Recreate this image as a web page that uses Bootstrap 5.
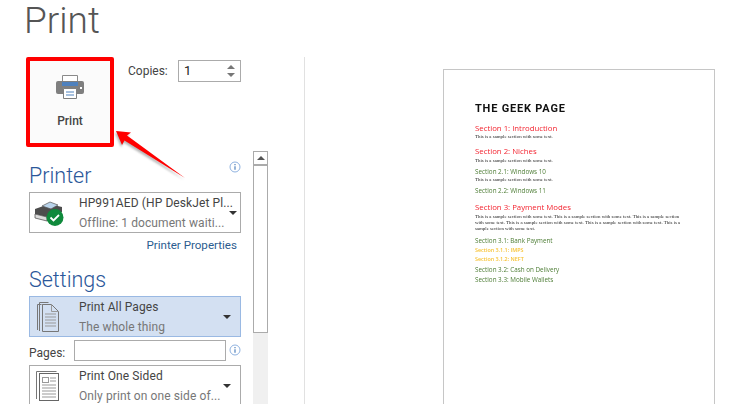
<!DOCTYPE html>
<html lang="en">
<head>
<meta charset="utf-8">
<title>Print</title>
<link href="https://cdn.jsdelivr.net/npm/bootstrap@5.3.0/dist/css/bootstrap.min.css" rel="stylesheet">
<style>
html,body{height:404px;overflow:hidden;background:#fff}
body{font-family:Roboto,"Open Sans",sans-serif;color:#444;font-size:12px;position:relative}
.page-title{font-size:37px;font-weight:300;line-height:41px;height:57px;margin:0;padding:0 0 0 24px;color:#555;font-family:Roboto,sans-serif}
.stage{height:347px}
.left-pane{width:305px;flex:none;border-right:1px solid #e1e1e1;padding-left:26px;height:347px;overflow:hidden}
.print-btn{width:88px;height:90px;border:4px solid #f00;border-radius:2px;background:#fbfbfb;color:#444;font-size:12px;font-weight:500;padding:13px 0 0;display:flex;flex-direction:column;align-items:center;line-height:16px}
.print-btn svg{display:block;margin-bottom:13px}
.copies-wrap{margin:3px 0 0 14px;height:22px;color:#444}
.copies-label{width:50px;flex:none}
.copies-box{width:63px;height:22px;border:1px solid #ababab;padding:0 0 0 5px;line-height:20px;color:#222;font-size:13px}
.spin{gap:4px;margin-right:5px}
.tri-up,.tri-down{width:0;height:0;border-left:4px solid transparent;border-right:4px solid transparent}
.tri-up{border-bottom:4px solid #777}.tri-down{border-top:4px solid #777}
.settings{width:212px;margin-left:3px}
.head-row{height:34px;margin-top:11px}
.sec-head{font-size:21.500px;line-height:28px;color:#2b579a;font-weight:300;margin:0}
.sec-settings{margin:10px 0 1px;height:29px}
.info-i{width:12px;height:12px;flex:none}
.info-top{margin-top:3px}
.drop{height:41px;border:1px solid #ababab;background:#fff;padding:0 9px 0 4px;color:#444}
.drop.active-drop{background:#d3e0f2;border-color:#9ab9e3}
.drop-icon{width:45px;flex:none}
.drop-text{width:150px;line-height:20px;white-space:nowrap;font-size:12px;letter-spacing:.1px}
.drop-text .sub{color:#777;display:block}
.tri-drop{width:0;height:0;border-left:4px solid transparent;border-right:4px solid transparent;border-top:4px solid #333;margin-left:auto}
.prop-link{color:#2b5c8f;text-align:right;padding:3px 4px 0 0;line-height:18px;height:23px;font-size:11.600px}
.pages-row{height:28px;padding-top:3px}
.pages-label{width:45px;flex:none;color:#444}
.pages-input{width:152px;height:21px;border:1px solid #ababab;background:#fff;flex:none}
.scroll-col{width:15px;height:253px;margin-left:12px;flex:none;background:#f0f0f0;margin-top:4px}
.scroll-thumb{height:182px;border:1px solid #ababab;background:#fff}
.scroll-up{height:14px;border-bottom:2px solid #ababab;display:flex;align-items:center;justify-content:center}
.scroll-up .tri-up{border-bottom:4px solid #555}
.preview{flex:1;padding:12px 0 0 138px;overflow:hidden}
.paper{width:272px;height:400px;border:1px solid #c6c6c6;padding:32px 0 0 31px;background:#fff}
.paper-flow{filter:blur(.22px)}
.doc-title{font-family:Roboto,sans-serif;font-weight:700;font-size:11px;letter-spacing:.8px;line-height:14px;color:#111;margin-bottom:7px}
.h-a,.h-b,.h-c,.body-t{white-space:nowrap}
.h-a{color:#f3232f;font-size:7.800px;line-height:10px;font-weight:500;font-family:"Open Sans",sans-serif}
.h-b{color:#4c7c34;font-size:6.300px;line-height:9px;font-weight:500;font-family:"Open Sans",sans-serif}
.h-c{color:#f7c233;font-size:5.400px;line-height:9px;font-weight:600;font-family:"Open Sans",sans-serif}
.body-t{font-family:"Liberation Serif",serif;color:#222;font-size:4.880px;line-height:6px}
.gap1{margin-top:1px}.gap2{margin-top:2px}.gap3{margin-top:3px}.gap4{margin-top:4px}.gap6{margin-top:6px}.gap7{margin-top:7px}
.arrow-over{position:absolute;left:110px;top:125px;width:85px;height:65px;pointer-events:none;overflow:visible}
.arrow-shadow{fill:#777;opacity:.55;filter:blur(1px)}
</style>
</head>
<body>
<h1 class="page-title">Print</h1>
<div class="stage d-flex">
  <div class="left-pane">
    <div class="d-flex">
      <button type="button" class="print-btn">
        <svg width="30" height="26" viewBox="0 0 30 26"><path d="M7.500 1.500h15v8h-15z" fill="#fff" stroke="#8a8a8a"/><rect x="1" y="7" width="28" height="13" rx="2" fill="#7f7f7f"/><rect x="7" y="8" width="16" height="4" fill="#4f81bd"/><rect x="25" y="13" width="2" height="2" fill="#fff"/><path d="M8.500 14.500h13v10h-13z" fill="#fff" stroke="#7f7f7f"/><path d="M11 18h8M11 21h8" stroke="#4f81bd"/></svg>
        <span>Print</span>
      </button>
      <div class="copies-wrap d-flex align-items-center">
        <span class="copies-label">Copies:</span>
        <div class="copies-box d-flex justify-content-between align-items-center"><span>1</span>
          <div class="spin d-flex flex-column"><div class="tri-up"></div><div class="tri-down"></div></div>
        </div>
      </div>
    </div>
    <div class="d-flex">
      <div class="settings">
        <div class="head-row d-flex justify-content-between">
          <h2 class="sec-head pt-1">Printer</h2>
          <svg class="info-i info-top" viewBox="0 0 12 12"><circle cx="6" cy="6" r="5" fill="#fff" stroke="#8fb2e0"/><path d="M6 5.200v3.600" stroke="#4f81bd" stroke-width="1.200"/><path d="M6 3v1.200" stroke="#4f81bd" stroke-width="1.200"/></svg>
        </div>
        <div class="drop d-flex align-items-center">
          <div class="drop-icon">
            <svg width="31" height="26" viewBox="0 0 31 26"><path d="M1 9l14-5 13 3v5L13 17 1 14z" fill="#4d4d4d"/><path d="M8 6l8-4 8 3-7 4z" fill="#b9d3ea" stroke="#555" stroke-width=".7"/><path d="M1 14l12 3v4L1 18z" fill="#dcdcdc" stroke="#444" stroke-width=".7"/><circle cx="21" cy="17.500" r="8.500" fill="#0f8a3c"/><path d="M16.500 17.500l3 3 5.500-5.500" fill="none" stroke="#fff" stroke-width="1.800"/></svg>
          </div>
          <div class="drop-text">HP991AED (HP DeskJet Pl...<span class="sub">Offline: 1 document waiti...</span></div>
          <div class="tri-drop"></div>
        </div>
        <div class="prop-link">Printer Properties</div>
        <h2 class="sec-head sec-settings">Settings</h2>
        <div class="drop active-drop d-flex align-items-center">
          <div class="drop-icon">
            <svg width="26" height="31" viewBox="0 0 26 31"><path d="M3.500 29V3.500h4M5.500 30V1.500h9M8.500 3.500h8" fill="none" stroke="#777"/><path d="M8.500 3.500h9l7 7v20h-16z" fill="none" stroke="#777"/><path d="M17.500 3.500v7h7" fill="none" stroke="#999"/><path d="M11 13h11M11 16h11M11 19h11M11 22h11M11 25h11" stroke="#999"/></svg>
          </div>
          <div class="drop-text">Print All Pages<span class="sub">The whole thing</span></div>
          <div class="tri-drop"></div>
        </div>
        <div class="pages-row d-flex align-items-start">
          <div class="pages-label pt-1">Pages:</div>
          <div class="pages-input"></div>
          <svg class="info-i ms-auto mt-1" viewBox="0 0 12 12"><circle cx="6" cy="6" r="5" fill="#fff" stroke="#8fb2e0"/><path d="M6 5.200v3.600" stroke="#4f81bd" stroke-width="1.200"/><path d="M6 3v1.200" stroke="#4f81bd" stroke-width="1.200"/></svg>
        </div>
        <div class="drop d-flex align-items-center">
          <div class="drop-icon">
            <svg width="26" height="31" viewBox="0 0 26 31"><path d="M2.500 29V1.500h20" fill="none" stroke="#777"/><rect x="5.500" y="3.500" width="19" height="27" fill="#fff" stroke="#666"/><rect x="8.500" y="7.500" width="6" height="5" fill="none" stroke="#999"/><path d="M16 8h6M16 11h6M8 15h14M8 18h14M8 21h14M8 24h14M8 27h14" stroke="#999"/></svg>
          </div>
          <div class="drop-text">Print One Sided<span class="sub">Only print on one side of...</span></div>
          <div class="tri-drop"></div>
        </div>
      </div>
      <div class="scroll-col">
        <div class="scroll-thumb"><div class="scroll-up"><div class="tri-up"></div></div></div>
      </div>
    </div>
  </div>
  <div class="preview">
    <div class="paper"><div class="paper-flow">
      <div class="doc-title">THE GEEK PAGE</div>
      <div class="h-a">Section 1: Introduction</div>
      <div class="body-t gap1">This is a sample section with some text.</div>
      <div class="h-a gap6">Section 2: Niches</div>
      <div class="body-t gap2">This is a sample section with some text.</div>
      <div class="h-b gap3">Section 2.1: Windows 10</div>
      <div class="body-t gap1">This is a sample section with some text.</div>
      <div class="h-b gap3">Section 2.2: Windows 11</div>
      <div class="h-a gap7">Section 3: Payment Modes</div>
      <div class="body-t gap2">This is a sample section with some text. This is a sample section with some text. This is a sample section<br>with some text. This is a sample section with some text. This is a sample section with some text. This is a<br>sample section with some text.</div>
      <div class="h-b gap4">Section 3.1: Bank Payment</div>
      <div class="h-c gap1">Section 3.1.1: IMPS</div>
      <div class="h-c">Section 3.1.2: NEFT</div>
      <div class="h-b gap1">Section 3.2: Cash on Delivery</div>
      <div class="h-b gap1">Section 3.3: Mobile Wallets</div>
    </div></div>
  </div>
</div>
<svg class="arrow-over" viewBox="0 0 85 65"><path class="arrow-shadow" d="M6 6L21 7.500 17 10.500 75 53 14.500 15.500 12 20Z" transform="translate(-1 2)"/><path d="M6 6L21 7.500 17 10.500 75 53 14.500 15.500 12 20Z" fill="#f00"/></svg>
</body>
</html>
